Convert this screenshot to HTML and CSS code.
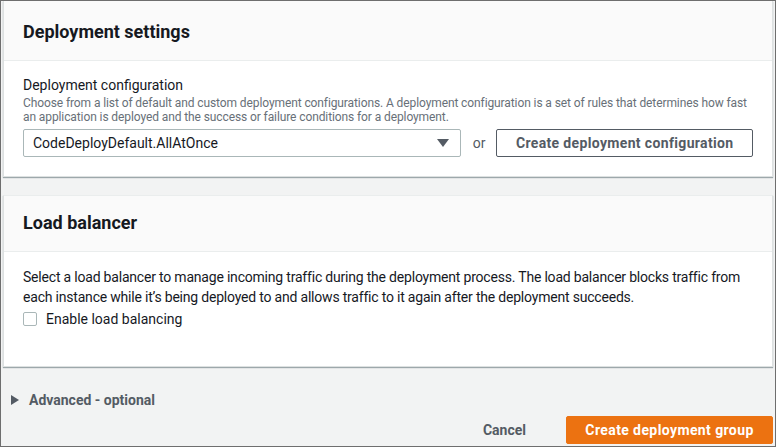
FILE: index.html
```html
<!DOCTYPE html>
<html lang="en">
<head>
<meta charset="utf-8">
<title>Create deployment group</title>
<link rel="stylesheet" href="styles.css">
</head>
<body>
<div class="frame">
  <section class="card">
    <div class="card-head first"><h2>Deployment settings</h2></div>
    <div class="card-body one">
      <div class="label">Deployment configuration</div>
      <div class="desc">Choose from a list of default and custom deployment configurations. A deployment configuration is a set of rules that determines how fast an application is deployed and the success or failure conditions for a deployment.</div>
      <div class="config-row">
        <div class="select">
          <span>CodeDeployDefault.AllAtOnce</span>
          <svg class="caret" width="12" height="8" viewBox="0 0 12 8"><path d="M0 0h12L6 8z" fill="#545b64"/></svg>
        </div>
        <span class="or">or</span>
        <button class="btn-outline">Create deployment configuration</button>
      </div>
    </div>
  </section>

  <section class="card second">
    <div class="card-head"><h2>Load balancer</h2></div>
    <div class="card-body two">
      <p class="text">Select a load balancer to manage incoming traffic during the deployment process. The load balancer blocks traffic from each instance while it’s being deployed to and allows traffic to it again after the deployment succeeds.</p>
      <label class="check"><span class="box"></span>Enable load balancing</label>
    </div>
  </section>

  <div class="advanced">
    <svg class="tri" width="8" height="10" viewBox="0 0 8 10"><path d="M0 0L8 5L0 10z" fill="#545b64"/></svg>
    <span>Advanced - optional</span>
  </div>

  <div class="footer">
    <button class="btn-link">Cancel</button>
    <button class="btn-primary">Create deployment group</button>
  </div>
</div>
</body>
</html>
```

FILE: styles.css
```css
* { box-sizing: border-box; }
html, body { margin: 0; padding: 0; }
body {
  font-family: Roboto, "Noto Sans", Arial, sans-serif;
  color: #16191f;
  background: #f2f3f3;
}
.frame {
  width: 776px;
  height: 447px;
  border: 1px solid #6e6e6e;
  background: #f2f3f3;
  padding: 0 2px 0 2px;
  overflow: hidden;
}
.card {
  background: #fff;
  border: 1px solid #dde1e1;
  border-top: none;
  box-shadow: 0 1px 1px rgba(0, 28, 36, 0.35);
}
.card.second {
  margin-top: 18px;
  border-top: 1px solid #eaeded;
}
.card-head {
  background: #fafafa;
  border-bottom: 1px solid #eaeded;
  padding: 16px 19px 17px;
}
.card-head.first { padding: 20px 19px 17px; }
.card-head h2 {
  margin: 0;
  font-size: 18px;
  line-height: 22px;
  font-weight: 700;
}
.card-body { padding: 14px 19px 19px; }
.card-body.two { padding: 15px 19px 37px; }
.label { font-size: 14px; line-height: 20px; }
.desc {
  font-size: 12px;
  line-height: 14px;
  color: #687078;
  letter-spacing: -0.1px;
  margin-top: 1px;
}
.config-row {
  display: flex;
  align-items: center;
  margin-top: 5px;
}
.select {
  width: 440px;
  height: 28px;
  border: 1px solid #aab7b8;
  border-radius: 2px;
  display: flex;
  align-items: center;
  justify-content: space-between;
  padding: 0 11px 0 9px;
  font-size: 14px;
}
.or {
  font-size: 14px;
  color: #545b64;
  margin: 0 11px 0 12px;
}
.btn-outline {
  height: 28px;
  width: 258px;
  border: 1px solid #545b64;
  border-radius: 2px;
  background: #fff;
  color: #545b64;
  font-family: inherit;
  font-size: 14px;
  font-weight: 700;
  letter-spacing: 0.35px;
  padding: 0;
}
.text {
  margin: 0;
  font-size: 14px;
  line-height: 20px;
  letter-spacing: -0.2px;
}
.check {
  display: flex;
  align-items: center;
  font-size: 14px;
  line-height: 20px;
  margin-top: 2px;
}
.box {
  width: 14px;
  height: 14px;
  border: 1px solid #aab7b8;
  border-radius: 2px;
  margin-right: 9px;
  background: #fff;
}
.advanced {
  display: flex;
  align-items: center;
  margin-top: 23px;
  padding-left: 8px;
  height: 20px;
  font-size: 14px;
  font-weight: 700;
  color: #545b64;
}
.tri { margin-right: 10px; }
.footer {
  display: flex;
  justify-content: flex-end;
  align-items: center;
  margin-top: 6px;
}
.btn-link {
  border: none;
  background: none;
  font-family: inherit;
  font-size: 14px;
  font-weight: 700;
  color: #545b64;
  padding: 0;
  margin-right: 40px;
}
.btn-primary {
  height: 28px;
  width: 207px;
  border: 1px solid #ec7211;
  border-radius: 2px;
  background: #ec7211;
  color: #fff;
  font-family: inherit;
  font-size: 14px;
  font-weight: 700;
  letter-spacing: 0.4px;
  padding: 0;
}
```
